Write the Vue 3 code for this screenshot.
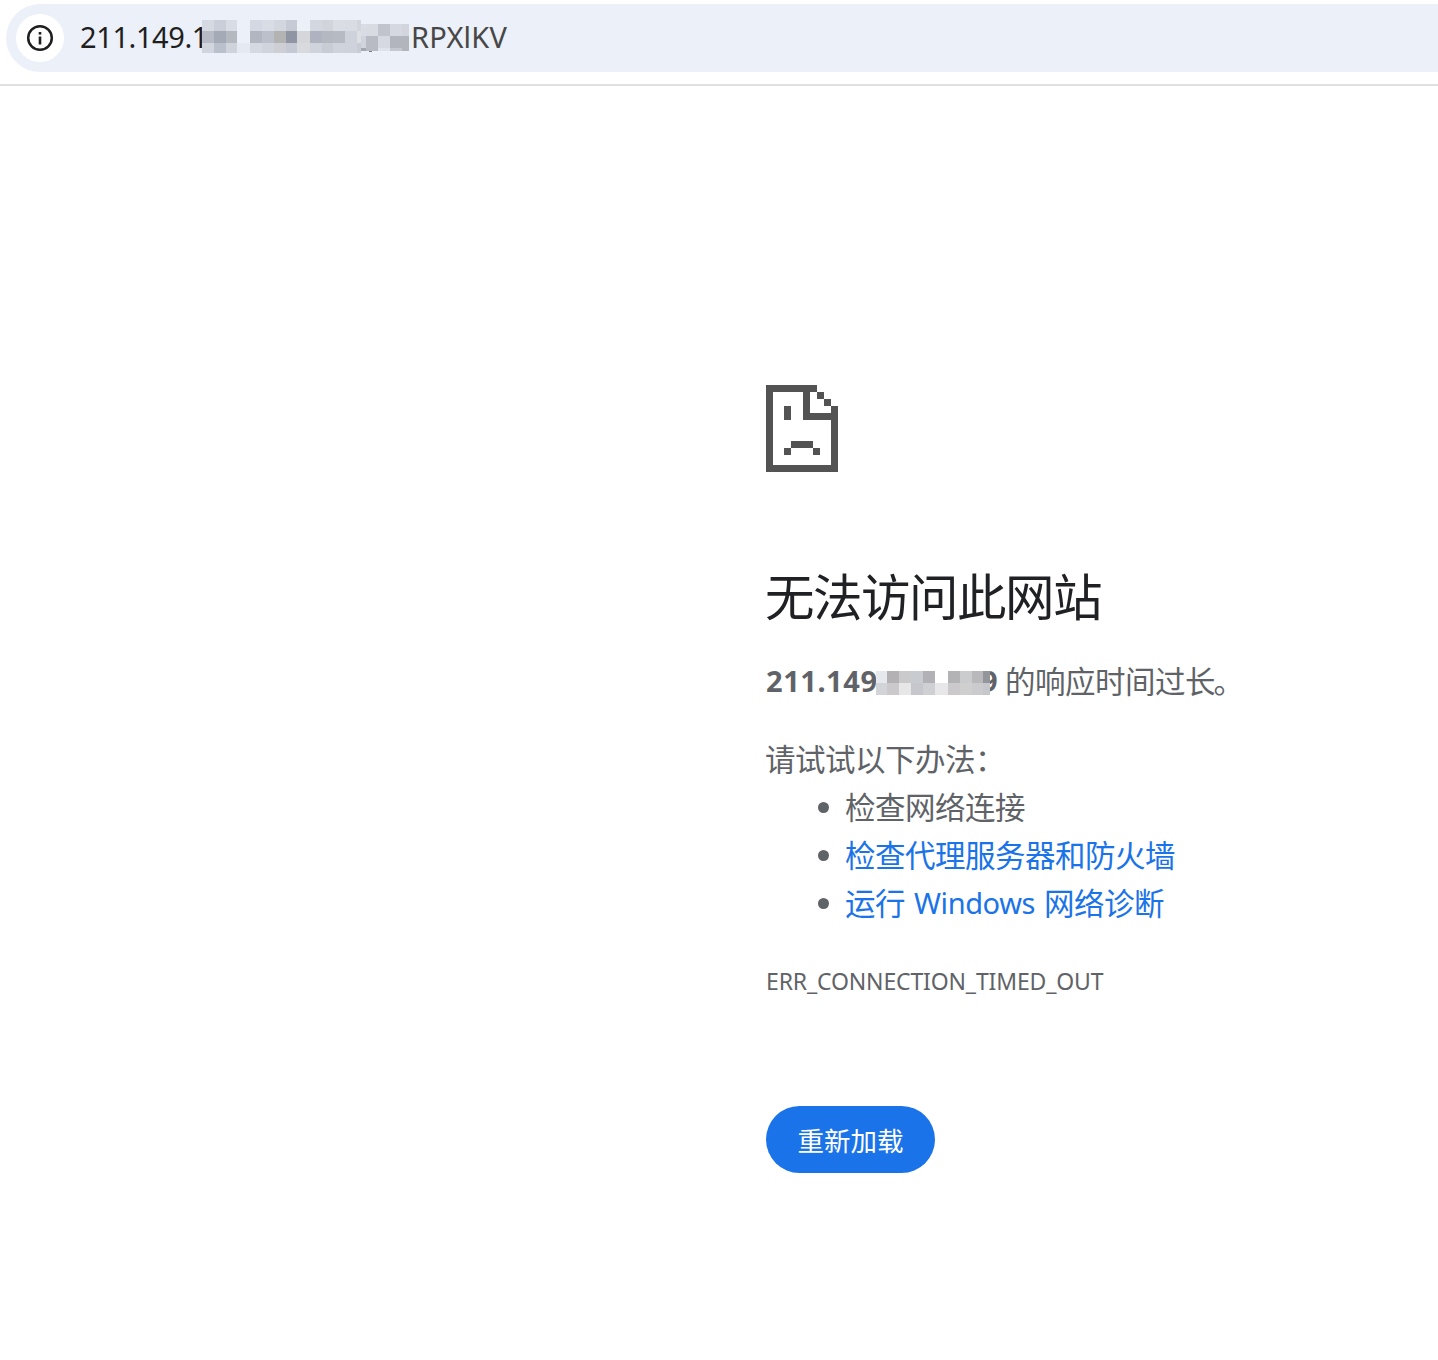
<script setup>
const urlMask = [
  [202, 20, 12, 11, '#d5d9e2'], [214, 20, 12, 11, '#c9ced8'], [226, 20, 11, 11, '#d8dce5'],
  [202, 31, 12, 12, '#b6bbc5'], [214, 31, 12, 12, '#a4abb7'], [226, 31, 11, 12, '#b4b9bf'],
  [202, 43, 12, 10, '#d0d5de'], [214, 43, 12, 10, '#bac1cd'], [226, 43, 11, 10, '#ced3dc'],
  [237, 43, 13, 10, '#e5e9f2'],
  [250, 20, 12, 11, '#d3d8e2'], [262, 20, 12, 11, '#d8dce5'], [274, 20, 12, 11, '#d2d6df'], [286, 20, 11, 11, '#c5cad5'],
  [250, 31, 12, 12, '#b1b6c0'], [262, 31, 12, 12, '#bbc0ca'], [274, 31, 12, 12, '#b3b3b3'], [286, 31, 11, 12, '#8f95a2'],
  [250, 43, 12, 10, '#d5d9e1'], [262, 43, 12, 10, '#d0d4dc'], [274, 43, 12, 10, '#cecfd4'], [286, 43, 11, 10, '#c4c9d3'],
  [297, 31, 13, 12, '#d5d6da'], [297, 43, 13, 10, '#d8dade'],
  [310, 20, 12, 11, '#d3d7e0'], [322, 20, 11, 11, '#d1d4da'], [333, 20, 12, 11, '#dadde4'], [345, 20, 12, 11, '#d9dce3'], [357, 20, 4, 11, '#d2d5dc'],
  [310, 31, 12, 12, '#aeb3bf'], [322, 31, 11, 12, '#b4b8c1'], [333, 31, 12, 12, '#b6bac3'], [345, 31, 12, 12, '#ced2db'], [357, 31, 4, 12, '#dddfe4'],
  [310, 43, 12, 10, '#cfd3dc'], [322, 43, 11, 10, '#c8ccd4'], [333, 43, 12, 10, '#cfd3db'], [345, 43, 12, 10, '#ced2da'], [357, 43, 4, 10, '#c8ccd5'],
  [361, 24, 5, 12, '#d9dce4'], [366, 24, 12, 12, '#d9dbe3'], [378, 24, 12, 12, '#c1c4cc'], [390, 24, 12, 12, '#d5d8e1'], [402, 24, 7, 12, '#d2d5de'],
  [361, 36, 5, 12, '#d0d4dd'], [366, 36, 12, 15, '#b8bbc4'], [378, 36, 12, 12, '#d6d9e1'], [390, 36, 12, 12, '#b2b5be'], [402, 36, 7, 15, '#b3b5bd'],
  [361, 48, 5, 3, '#a2a6ae'], [378, 48, 12, 3, '#dfe3ec'], [390, 48, 12, 3, '#c4c7d0'], [369, 51, 3, 1, '#777b82'],
]
const hostMask = [
  [876, 671, 11, 12, '#e5e9ed'], [887, 671, 12, 12, '#b3b1b3'], [899, 671, 12, 12, '#cacacc'], [911, 671, 12, 12, '#c8cbd0'], [923, 671, 12, 12, '#b2b2b6'],
  [948, 671, 12, 12, '#b3b2b4'], [960, 671, 12, 12, '#cbcccd'], [972, 671, 11, 12, '#b9b9bb'], [983, 671, 7, 12, '#929599'],
  [876, 683, 11, 12, '#d2d4d7'], [887, 683, 12, 12, '#cbc9cb'], [899, 683, 12, 12, '#e7e7e8'], [911, 683, 12, 12, '#c6c7cd'], [923, 683, 12, 12, '#cfd0d3'], [935, 683, 13, 12, '#e7e7e9'],
  [948, 683, 12, 12, '#cbc9cb'], [960, 683, 12, 12, '#cfcfd0'], [972, 683, 11, 12, '#cbcacd'], [983, 683, 7, 12, '#c6c7cb'],
]
const tips = [
  { text: '检查网络连接', link: false },
  { text: '检查代理服务器和防火墙', link: true },
]
</script>

<template>
  <div class="page">
    <header class="toolbar">
      <div class="omnibox">
        <span class="info">
          <svg width="28" height="28" viewBox="0 0 28 28">
            <circle cx="14" cy="14" r="11.8" fill="none" stroke="#1f1f1f" stroke-width="2.5" />
            <rect x="12.7" y="8" width="2.6" height="2.6" fill="#1f1f1f" />
            <rect x="12.7" y="12.5" width="2.6" height="8" fill="#1f1f1f" />
          </svg>
        </span>
        <div class="url">
          <span class="url-host">211.149.1</span>
          <svg class="url-mask" width="209" height="34" viewBox="202 20 209 34" shape-rendering="crispEdges">
            <rect v-for="(c, i) in urlMask" :key="i" :x="c[0]" :y="c[1]" :width="c[2]" :height="c[3]" :fill="c[4]" />
          </svg>
          <span class="url-path">RPXlKV</span>
        </div>
      </div>
    </header>

    <main class="error">
      <svg class="sad" width="72" height="87" viewBox="0 0 72 87" shape-rendering="crispEdges">
        <path fill="#535353" d="M0 0H51V7H44V28H65V21H72V87H0ZM7 7V80H65V35H37V7Z" />
        <path fill="#535353" d="M51 7h7v7h-7zM58 14h7v7h-7zM18 21h7v14h-7zM25 56h22v7h-22zM18 63h7v7h-7zM47 63h7v7h-7z" />
      </svg>
      <h1>无法访问此网站</h1>
      <p class="reason">
        <strong class="host">211.149</strong>
        <svg class="host-mask" width="114" height="24" viewBox="876 671 114 24" shape-rendering="crispEdges">
          <rect v-for="(c, i) in hostMask" :key="i" :x="c[0]" :y="c[1]" :width="c[2]" :height="c[3]" :fill="c[4]" />
        </svg>
        <strong class="host-end">9</strong>
        <span class="cjk">的响应时间过<span class="tight">长</span>。</span>
      </p>
      <p class="try cjk">请试试以下办法：</p>
      <ul>
        <li v-for="tip in tips" :key="tip.text"><a v-if="tip.link" class="cjk">{{ tip.text }}</a><span v-else class="cjk">{{ tip.text }}</span></li>
        <li><a class="diag"><span class="cjk">运行</span><span class="latin">Windows</span><span class="cjk">网络诊断</span></a></li>
      </ul>
      <p class="code"><span>ERR_CONNECTION_TIMED_OUT</span></p>
      <button>重新加载</button>
    </main>
  </div>
</template>

<style>
body { margin: 0; background: #fff; }
</style>

<style scoped>
.page {
  width: 1438px;
  height: 1360px;
  overflow: hidden;
  background: #fff;
  font-family: "Noto Sans", "Noto Sans CJK SC", sans-serif;
}
.toolbar {
  box-sizing: border-box;
  height: 86px;
  padding: 4px 0 0 6px;
  border-bottom: 2px solid #e0e0e0;
}
.omnibox {
  box-sizing: border-box;
  height: 68px;
  padding-left: 10px;
  display: flex;
  align-items: center;
  border-radius: 34px 0 0 34px;
  background: #ecf0f9;
}
.info {
  width: 48px;
  height: 48px;
  display: flex;
  align-items: center;
  justify-content: center;
  border-radius: 50%;
  background: #fff;
}
.url {
  margin-left: 16px;
  display: flex;
  height: 40px;
  line-height: 38px;
  font-size: 29px;
}
.url-host {
  width: 122px;
  white-space: nowrap;
  letter-spacing: -0.4px;
  color: #1f1f1f;
}
.url-mask { flex: none; position: relative; margin-top: 2px; }
.url-path { color: #474747; letter-spacing: 0.2px; }
.error {
  padding: 299px 0 0 766px;
  color: #5f6368;
  font-size: 30px;
}
.cjk {
  font-family: "Noto Sans CJK SC", sans-serif;
  font-size: 30.5px;
  letter-spacing: -0.5px;
}
.tight { letter-spacing: -2px; }
.sad { display: block; }
h1 {
  margin: 94px 0 0 -1px;
  height: 58px;
  line-height: 58px;
  font-family: "Noto Sans CJK SC", sans-serif;
  font-size: 49.5px;
  letter-spacing: -1.5px;
  font-weight: 400;
  color: #202124;
}
p { margin: 0; }
.reason {
  margin-top: 32px;
  height: 48px;
  line-height: 48px;
  display: flex;
  white-space: nowrap;
}
.host, .host-end { line-height: 50px; font-size: 29px; }
.host { width: 110px; letter-spacing: 0.55px; }
.host-mask { flex: none; position: relative; margin-top: 15px; }
.host-end {
  width: 17px;
  margin-left: -9px;
  margin-right: 7px;
}
.try { margin: 30px 0 0 -1px; height: 48px; line-height: 48px; }
ul { margin: 0; padding-left: 80px; list-style: none; }
li { height: 48px; line-height: 48px; display: flex; }
li::before {
  content: "";
  width: 11px;
  height: 11px;
  margin: 20px 16px 0 -28px;
  border-radius: 50%;
  background: #5f6368;
}
a { color: #1a73e8; }
.diag { display: flex; gap: 9px; }
.latin { line-height: 50px; font-size: 29px; letter-spacing: -0.4px; }
.code {
  margin-top: 37px;
  height: 36px;
  line-height: 36px;
  font-size: 23px;
  letter-spacing: -0.15px;
}
button {
  display: block;
  width: 169px;
  height: 67px;
  margin-top: 107px;
  padding: 0;
  border: 0;
  border-radius: 34px;
  background: #1a73e8;
  color: #fff;
  font-family: "Noto Sans CJK SC", sans-serif;
  font-size: 26.5px;
  line-height: 67px;
}
</style>
